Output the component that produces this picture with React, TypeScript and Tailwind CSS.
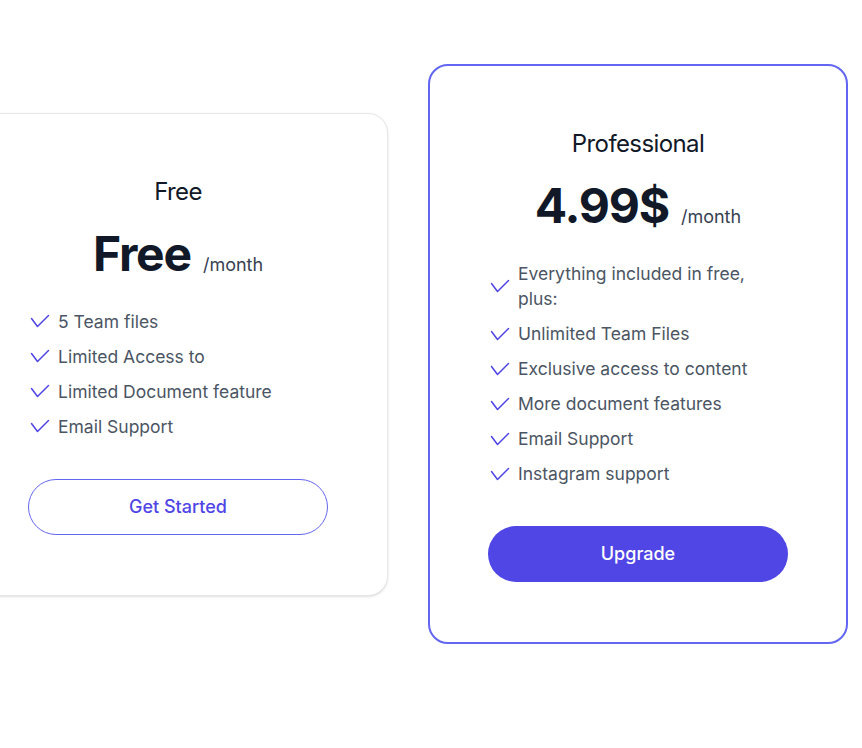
import React from 'react';

type Plan = {
  name: string;
  price: string;
  features: string[];
  cta: string;
  highlighted?: boolean;
};

const plans: Plan[] = [
  {
    name: 'Free',
    price: 'Free',
    features: ['5 Team files', 'Limited Access to', 'Limited Document feature', 'Email Support'],
    cta: 'Get Started',
  },
  {
    name: 'Professional',
    price: '4.99$',
    features: [
      'Everything included in free, plus:',
      'Unlimited Team Files',
      'Exclusive access to content',
      'More document features',
      'Email Support',
      'Instagram support',
    ],
    cta: 'Upgrade',
    highlighted: true,
  },
];

function Check() {
  return (
    <svg
      viewBox="0 0 20 14"
      fill="none"
      stroke="currentColor"
      strokeWidth={1.5}
      strokeLinecap="round"
      strokeLinejoin="round"
      className="w-5 h-[14px] shrink-0 text-[#4f46e5]"
    >
      <path d="M1.5 4.5 7.5 12.5 18.5 1.5" />
    </svg>
  );
}

function PlanCard({ plan }: { plan: Plan }) {
  return (
    <div
      className={
        plan.highlighted
          ? 'w-[420px] shrink-0 rounded-[20px] border-2 border-[#6366f1] bg-white px-[58px] pt-[62px] pb-[60px]'
          : 'w-[420px] shrink-0 rounded-[20px] border border-gray-200 bg-white px-[59px] pt-[62px] pb-[60px] shadow-sm -ml-[32px]'
      }
    >
      <h3 className="text-center text-2xl leading-8 tracking-tight text-[#111827]">{plan.name}</h3>
      <div className="mt-[22px] flex items-baseline justify-center gap-3">
        <span className="text-5xl leading-none font-bold tracking-tight text-[#111827]">{plan.price}</span>
        <span className="text-lg text-[#374151]">/month</span>
      </div>
      <ul className="mt-[30px] flex flex-col gap-[10px]">
        {plan.features.map((f) => (
          <li key={f} className="flex items-center gap-[8px] pl-[2px]">
            <Check />
            <span className="text-[17.5px] leading-[25px] text-[#4b5563]">{f}</span>
          </li>
        ))}
      </ul>
      <button
        className={
          plan.highlighted
            ? 'mt-[40px] h-[56px] w-full rounded-full bg-[#4f46e5] text-lg font-medium text-white'
            : 'mt-[40px] h-[56px] w-full rounded-full border border-[#6366f1] bg-white text-lg font-medium text-[#4f46e5]'
        }
      >
        {plan.cta}
      </button>
    </div>
  );
}

export default function App() {
  return (
    <div
      className="min-h-screen bg-white pt-[64px] overflow-hidden"
      style={{ fontFamily: 'Inter, "Noto Sans", sans-serif' }}
    >
      <div className="flex items-center gap-10">
        {plans.map((p) => (
          <PlanCard key={p.name} plan={p} />
        ))}
      </div>
    </div>
  );
}
